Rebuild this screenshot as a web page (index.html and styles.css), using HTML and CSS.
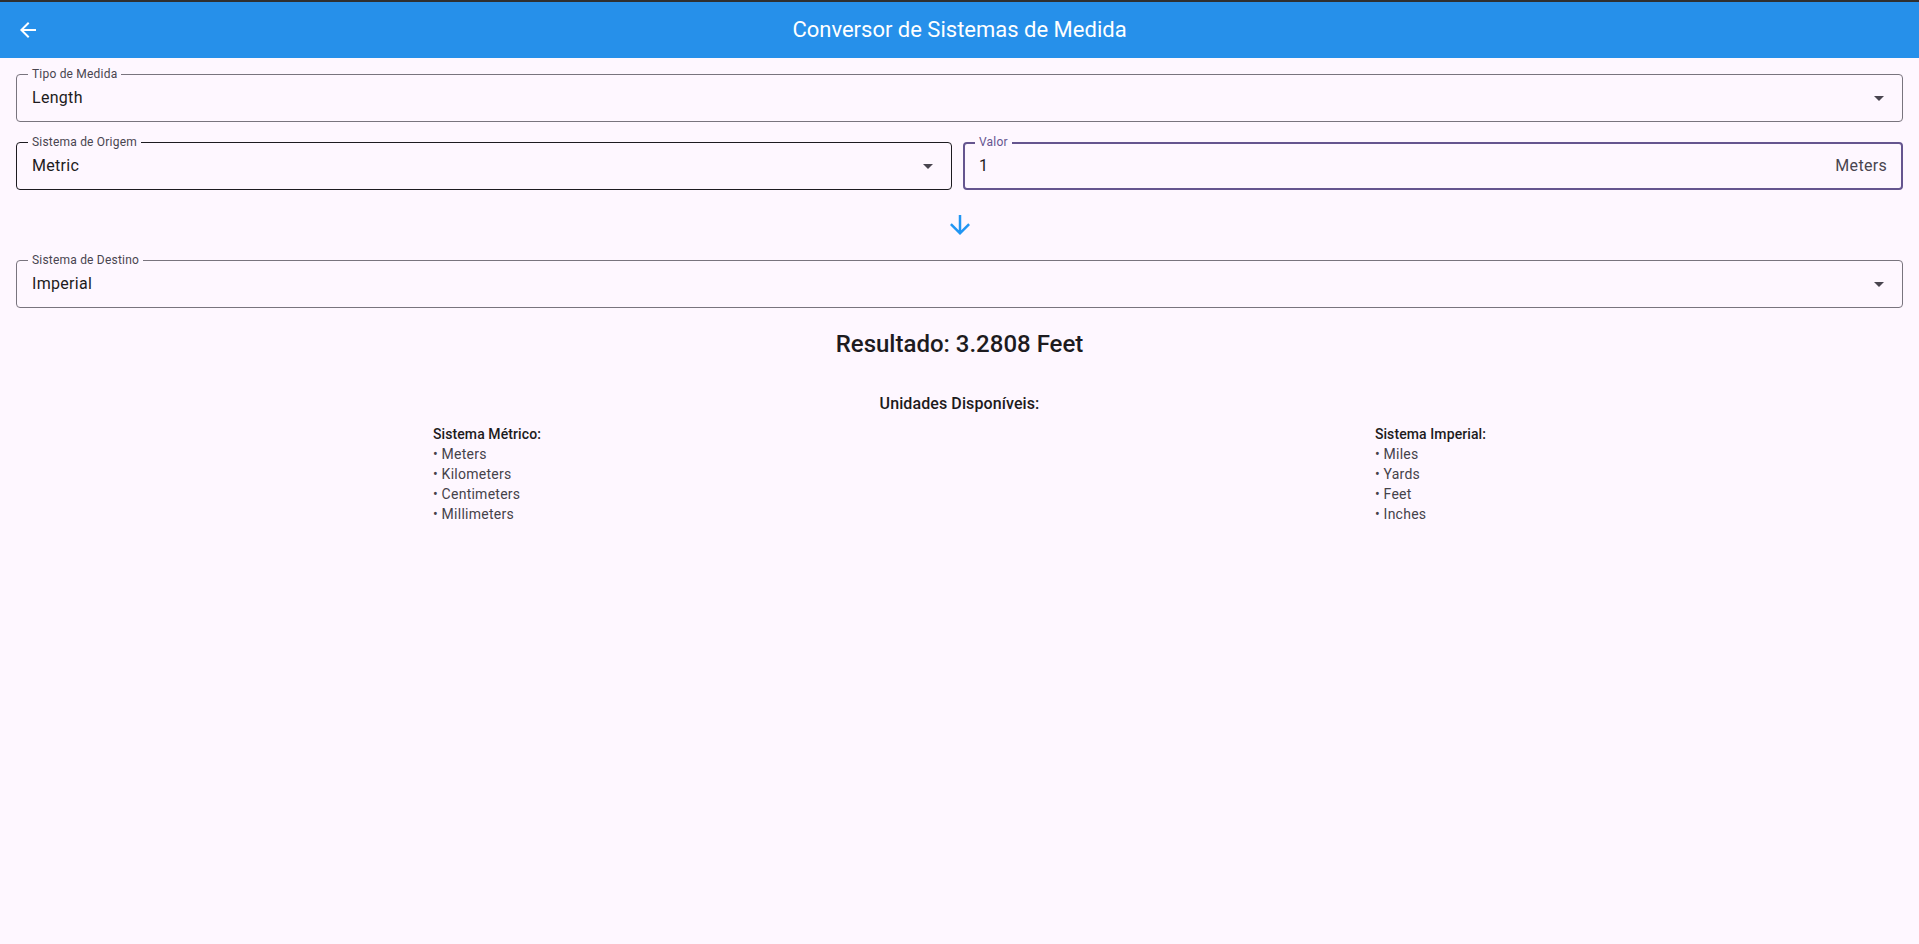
FILE: index.html
```html
<!DOCTYPE html>
<html lang="pt">
<head>
<meta charset="utf-8">
<title>Conversor de Sistemas de Medida</title>
<link rel="stylesheet" href="styles.css">
</head>
<body>
<div class="topline"></div>
<header class="appbar">
  <div class="appbar-lead">
    <svg class="icon24" viewBox="0 0 24 24"><path fill="#ffffff" d="M20 11H7.83l5.59-5.59L12 4l-8 8 8 8 1.41-1.41L7.83 13H20v-2z"/></svg>
  </div>
  <h1 class="appbar-title">Conversor de Sistemas de Medida</h1>
  <div class="appbar-trail"></div>
</header>
<main class="content">
  <div class="field">
    <span class="field-label">Tipo de Medida</span>
    <span class="field-value">Length</span>
    <svg class="icon24 drop" viewBox="0 0 24 24"><path fill="#49454f" d="M7 10l5 5 5-5z"/></svg>
  </div>

  <div class="row">
    <div class="field field-hover">
      <span class="field-label">Sistema de Origem</span>
      <span class="field-value">Metric</span>
      <svg class="icon24 drop" viewBox="0 0 24 24"><path fill="#49454f" d="M7 10l5 5 5-5z"/></svg>
    </div>
    <div class="field field-focus">
      <span class="field-label">Valor</span>
      <span class="field-value">1</span>
      <span class="field-suffix">Meters</span>
    </div>
  </div>

  <div class="arrow">
    <svg class="icon30" viewBox="0 0 24 24"><path fill="#2196f3" d="M20 12l-1.41-1.41L13 16.17V4h-2v12.17l-5.58-5.59L4 12l8 8 8-8z"/></svg>
  </div>

  <div class="field">
    <span class="field-label">Sistema de Destino</span>
    <span class="field-value">Imperial</span>
    <svg class="icon24 drop" viewBox="0 0 24 24"><path fill="#49454f" d="M7 10l5 5 5-5z"/></svg>
  </div>

  <div class="result">Resultado: 3.2808 Feet</div>

  <div class="units-title">Unidades Disponíveis:</div>

  <div class="units">
    <div class="unit-col">
      <div class="unit-head">Sistema Métrico:</div>
      <div class="unit-item">• Meters</div>
      <div class="unit-item">• Kilometers</div>
      <div class="unit-item">• Centimeters</div>
      <div class="unit-item">• Millimeters</div>
    </div>
    <div class="unit-col">
      <div class="unit-head">Sistema Imperial:</div>
      <div class="unit-item">• Miles</div>
      <div class="unit-item">• Yards</div>
      <div class="unit-item">• Feet</div>
      <div class="unit-item">• Inches</div>
    </div>
  </div>
</main>
</body>
</html>
```
FILE: styles.css
```css
* { box-sizing: border-box; }

html, body {
  margin: 0;
  padding: 0;
  background: #fef7ff;
  font-family: Roboto, "Noto Sans", "Liberation Sans", sans-serif;
  color: #1d1b20;
}

.topline {
  height: 2px;
  background: #2f2f2f;
}

.appbar {
  height: 56px;
  background: #2690ea;
  display: grid;
  grid-template-columns: 56px 1fr 56px;
  align-items: center;
}

.appbar-lead {
  padding-left: 16px;
  display: flex;
  align-items: center;
}

.appbar-title {
  margin: 0;
  text-align: center;
  font-size: 22px;
  line-height: 28px;
  font-weight: 400;
  color: #ffffff;
}

.icon24 {
  width: 24px;
  height: 24px;
  display: block;
  flex: none;
}

.icon30 {
  width: 30px;
  height: 30px;
  display: block;
}

.content {
  padding: 16px;
  display: flex;
  flex-direction: column;
}

.row {
  display: flex;
  gap: 11px;
  margin-top: 20px;
}

.row .field {
  flex: 1 1 0;
}

.field {
  position: relative;
  height: 48px;
  border: 1px solid #79747e;
  border-radius: 4px;
  display: flex;
  align-items: center;
  padding: 0 11px 0 15px;
}

.field-hover {
  border-color: #1d1b20;
}

.field-focus {
  border: 2px solid #65558f;
  padding: 0 14px 0 14px;
}

.field-label {
  position: absolute;
  top: -9px;
  left: 11px;
  padding: 0 4px;
  background: #fef7ff;
  font-size: 12px;
  line-height: 16px;
  color: #49454f;
  letter-spacing: 0.2px;
}

.field-focus .field-label {
  top: -10px;
  left: 10px;
  color: #65558f;
}

.field-value {
  flex: 1;
  font-size: 16px;
  line-height: 24px;
  color: #1d1b20;
  letter-spacing: 0.3px;
}

.field-suffix {
  font-size: 16px;
  line-height: 24px;
  color: #49454f;
  letter-spacing: 0.3px;
}

.arrow {
  margin: 20px 0;
  display: flex;
  justify-content: center;
}

.result {
  margin-top: 20px;
  text-align: center;
  font-size: 24px;
  line-height: 32px;
  font-weight: 500;
}

.units-title {
  margin-top: 32px;
  text-align: center;
  font-size: 16px;
  line-height: 24px;
  font-weight: 500;
  letter-spacing: 0.1px;
}

.units {
  margin-top: 8px;
  display: flex;
  justify-content: space-around;
}

.unit-head {
  font-size: 14px;
  line-height: 20px;
  font-weight: 500;
  letter-spacing: 0.1px;
}

.unit-item {
  font-size: 14px;
  line-height: 20px;
  font-weight: 400;
  letter-spacing: 0.25px;
  color: #45424a;
}
```
